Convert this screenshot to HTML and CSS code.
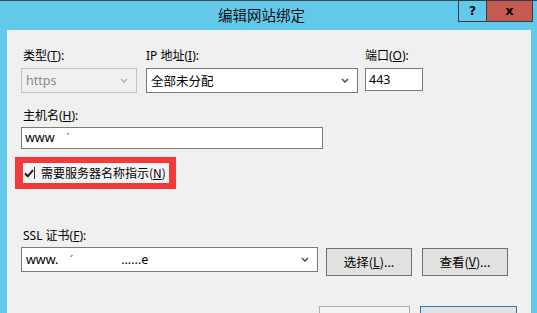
FILE: index.html
```html
<!DOCTYPE html>
<html lang="zh-CN">
<head>
    <meta charset="UTF-8">
    <title>编辑网站绑定</title>
    <link rel="stylesheet" href="styles.css">
</head>
<body>
    <div class="titlebar">
        <div class="caption">编辑网站绑定</div>
        <div class="caption-buttons">
            <div class="cap-btn help">?</div>
            <div class="cap-btn close">x</div>
        </div>
    </div>
    <div class="client">
        <div class="row row-top">
            <div class="field f-type">
                <label class="lbl lbl-left">类型(<u>T</u>):</label>
                <div class="combo disabled">
                    <span>https</span>
                    <svg class="arrow" width="8" height="5" viewBox="0 0 8 5"><path d="M1 1 L4 4 L7 1" fill="none" stroke="#b5b5b5" stroke-width="1.6"/></svg>
                </div>
            </div>
            <div class="field f-ip">
                <label class="lbl">IP 地址(<u>I</u>):</label>
                <div class="combo">
                    <span>全部未分配</span>
                    <svg class="arrow" width="8" height="5" viewBox="0 0 8 5"><path d="M1 1 L4 4 L7 1" fill="none" stroke="#555" stroke-width="1.6"/></svg>
                </div>
            </div>
            <div class="field f-port">
                <label class="lbl">端口(<u>O</u>):</label>
                <div class="textbox port">443</div>
            </div>
        </div>

        <div class="row-host">
            <label class="lbl lbl-left">主机名(<u>H</u>):</label>
            <div class="textbox host">www<span class="mark">ˊ</span></div>
        </div>

        <div class="highlight">
            <span class="check">
                <svg width="10" height="9" viewBox="0 0 10 9"><path d="M1 4.5 L3.8 7.3 L9 1.2" fill="none" stroke="#1a1a1a" stroke-width="2"/></svg>
            </span>
            <span class="check-text">需要服务器名称指示(<u>N</u>)</span>
        </div>

        <div class="row-ssl">
            <label class="lbl lbl-left">SSL 证书(<u>F</u>):</label>
            <div class="ssl-line">
                <div class="combo ssl">
                    <span>www.<span class="mark">ˊ</span><span class="gap"></span>......e</span>
                    <svg class="arrow" width="8" height="5" viewBox="0 0 8 5"><path d="M1 1 L4 4 L7 1" fill="none" stroke="#555" stroke-width="1.6"/></svg>
                </div>
                <div class="btn b-select">选择(<u>L</u>)...</div>
                <div class="btn b-view">查看(<u>V</u>)...</div>
            </div>
        </div>

        <div class="footer-buttons">
            <div class="btn b-ok"></div>
            <div class="btn b-cancel"></div>
        </div>
    </div>
</body>
</html>
```

FILE: styles.css
```css
html, body {
    margin: 0;
    padding: 0;
}
body {
    width: 537px;
    height: 313px;
    overflow: hidden;
    background-color: #63c9ea;
    font-family: "Noto Sans", "Noto Sans CJK SC", sans-serif;
    font-size: 12px;
    color: #000;
}
u {
    text-decoration: underline;
    text-underline-offset: 1px;
}

/* title bar */
.titlebar {
    display: flex;
    height: 29px;
    border-top: 1px solid #3a4a52;
}
.caption {
    flex: 1;
    padding-left: 65px;
    text-align: center;
    font-family: "Noto Sans CJK SC", sans-serif;
    font-size: 14.5px;
    line-height: 27px;
    color: #111;
}
.caption-buttons {
    display: flex;
    align-items: flex-start;
    margin-right: 4px;
    margin-top: -1px;
}
.cap-btn {
    height: 20px;
    border: 1px solid #2f3e46;
    font-family: "DejaVu Sans", sans-serif;
    font-weight: bold;
    text-align: center;
    line-height: 20px;
    font-size: 12px;
}
.cap-btn.help {
    width: 27px;
    border-right: none;
    background-color: #63c9ea;
}
.cap-btn.close {
    width: 45px;
    background-color: #c75a50;
    font-size: 13px;
}

/* client area */
.client {
    margin-left: 7px;
    width: 524px;
    height: 283px;
    padding: 18px 0 0 14px;
    background-color: #f0f0f0;
    box-sizing: border-box;
    overflow: hidden;
}
.lbl {
    display: block;
    height: 16px;
    line-height: 16px;
    white-space: nowrap;
}
.lbl-left {
    padding-left: 2px;
}
.row-top {
    display: flex;
    align-items: flex-start;
}
.row-top .lbl {
    margin-bottom: 4px;
}
.f-type {
    width: 116px;
    margin-right: 9px;
}
.f-ip {
    width: 212px;
    margin-right: 7px;
}
.f-port {
    width: 58px;
}
.combo {
    display: flex;
    align-items: center;
    justify-content: space-between;
    height: 25px;
    padding: 0 8px 0 4px;
    border: 1px solid #7a7a7a;
    background-color: #fff;
    box-sizing: border-box;
    font-size: 12.5px;
    white-space: nowrap;
}
.combo.disabled {
    border-color: #c3c3c3;
    background-color: #f0f0f0;
    color: #8a8a8a;
}
.textbox {
    height: 23px;
    line-height: 21px;
    padding: 0 3px;
    border: 1px solid #7a7a7a;
    background-color: #fff;
    box-sizing: border-box;
    font-size: 12.5px;
    white-space: nowrap;
}
.mark {
    margin-left: 12px;
    font-size: 10px;
    color: #444;
}
.gap {
    display: inline-block;
    width: 48px;
}

.row-host {
    margin-top: 15px;
}
.row-host .lbl {
    margin-bottom: 3px;
}
.textbox.host {
    width: 302px;
    height: 22px;
    line-height: 20px;
}

/* red highlight around the checkbox */
.highlight {
    display: flex;
    align-items: center;
    width: 161px;
    height: 32px;
    margin: 8px 0 0 -6px;
    border-style: solid;
    border-color: #f23a3a;
    border-width: 6px 7px 6px 8px;
    box-sizing: border-box;
    background-color: #f4f4f4;
    font-family: "Noto Sans CJK SC", sans-serif;
    font-size: 12px;
    white-space: nowrap;
}
.check {
    display: flex;
    align-items: center;
    flex-shrink: 0;
    width: 10px;
    height: 12px;
    padding-left: 1px;
    border-right: 1px solid #333;
    margin-right: 6px;
}
.check-text {
    line-height: 18px;
}

.row-ssl {
    margin-top: 39px;
}
.row-ssl .lbl {
    margin-bottom: 3px;
}
.ssl-line {
    display: flex;
    align-items: flex-start;
}
.combo.ssl {
    width: 297px;
    margin-right: 8px;
}
.btn {
    height: 28px;
    line-height: 26px;
    border: 1px solid #707070;
    background-color: #e1e1e1;
    box-sizing: border-box;
    text-align: center;
    font-family: "Noto Sans CJK SC", sans-serif;
    font-size: 12.5px;
    margin-top: 1px;
    white-space: nowrap;
}
.b-select {
    width: 86px;
    margin-right: 10px;
}
.b-view {
    width: 86px;
}

.footer-buttons {
    display: flex;
    margin: 29px 0 0 298px;
}
.b-ok {
    width: 91px;
    margin-right: 10px;
    border-color: #adadad;
    background-color: #f3f3f3;
}
.b-cancel {
    width: 97px;
    border-color: #2f7bc0;
}
```
